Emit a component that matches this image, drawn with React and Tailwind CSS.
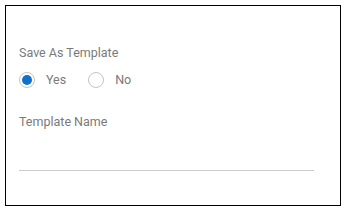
import React from "react";

function Radio({ checked, label }) {
  return (
    <label className="flex items-center gap-[11px]">
      <span className="flex h-[16px] w-[16px] items-center justify-center rounded-full border border-[#c4c4c4] bg-white">
        {checked && <span className="h-[10px] w-[10px] rounded-full bg-[#0f72c8]" />}
      </span>
      <span className="text-[12.5px] text-[#7a7a7a]">{label}</span>
    </label>
  );
}

export default function App() {
  return (
    <div className="h-[211px] w-[346px] bg-white p-[5px]" style={{ fontFamily: "Roboto, 'Liberation Sans', sans-serif" }}>
      <div className="flex h-full w-full flex-col border border-black pl-[13px] pr-[26px] pt-[39px]">
        <div className="text-[12.5px] leading-[16px] text-[#7a7a7a]">Save As Template</div>
        <div className="mt-[10px] flex items-center gap-[22px]">
          <Radio checked label="Yes" />
          <Radio label="No" />
        </div>
        <div className="mt-[24px] text-[12.5px] leading-[16px] text-[#7a7a7a]">Template Name</div>
        <div className="mt-[40px] h-px w-full bg-[#cccccc]" />
      </div>
    </div>
  );
}
